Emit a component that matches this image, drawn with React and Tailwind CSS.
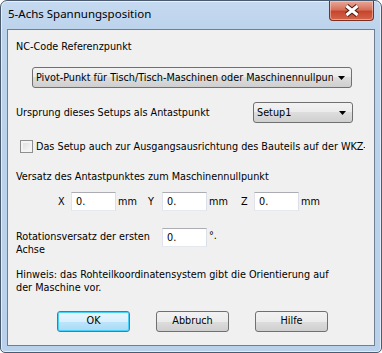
import React from "react";

const font = "font-['DejaVu_Sans_Condensed','Liberation_Sans',Arial,sans-serif]";

function Combo({ children, className = "" }) {
  return (
    <div
      className={`relative flex h-[21px] items-center rounded-[3px] border border-[#707070] bg-[linear-gradient(#f2f2f2,#ebebeb_50%,#dddddd_50%,#cfcfcf)] ${className}`}
    >
      <div className="ml-[3px] mr-[18px] overflow-hidden whitespace-nowrap leading-[13px]">{children}</div>
      <svg className="absolute right-[6px] top-[8px]" width="7" height="4" viewBox="0 0 7 4">
        <path d="M0 0H7L3.5 4Z" fill="#000" />
      </svg>
    </div>
  );
}

function Field({ className = "" }) {
  return (
    <div
      className={`h-[19px] w-[45px] border border-[#abadb3] border-t-[#abadb3] border-l-[#e2e3ea] border-r-[#dbdfe6] border-b-[#e3e9ef] bg-white pl-[4px] pt-[2px] leading-[13px] ${className}`}
    >
      0.
    </div>
  );
}

function Btn({ children, def }) {
  return (
    <div
      className={`flex h-[21px] w-[73px] items-center justify-center rounded-[3px] border ${
        def
          ? "border-[#3c7fb1] shadow-[inset_0_0_0_1px_#48d0f8] bg-[linear-gradient(#eaf6fd,#d9f0fc_50%,#bee6fd_50%,#a7d9f5)]"
          : "border-[#707070] bg-[linear-gradient(#f2f2f2,#ebebeb_50%,#dddddd_50%,#cfcfcf)]"
      }`}
    >
      {children}
    </div>
  );
}

export default function App() {
  return (
    <div className={`h-[353px] w-[382px] ${font} text-[10.75px] text-black`}>
      <div className="flex h-[353px] w-[382px] flex-col rounded-t-[7px] rounded-b-[5px] border border-[#4a5b70] bg-[linear-gradient(#c5daf0,#bcd3ec_30px,#b9d1ea)] shadow-[inset_0_0_0_1px_rgba(255,255,255,0.6)]">
        <div className="flex h-[28px] items-start">
          <div className="ml-[7px] mt-[5px] font-['Noto_Sans',sans-serif] text-[11.5px] leading-[16px] text-black">
            5-Achs Spannungsposition
          </div>
          <div className="ml-auto mr-[7px] flex h-[20px] w-[45px] items-center justify-center rounded-b-[4px] border border-t-0 border-[#7d2f20] bg-[linear-gradient(#e9a898,#d6725c_45%,#c7452c_55%,#d2664c)] shadow-[inset_0_0_0_1px_rgba(255,220,210,0.5)]">
            <svg width="16" height="13" viewBox="0 0 16 13">
              <path
                d="M2.5 2L8 6.5L13.5 2M2.5 11L8 6.5L13.5 11"
                stroke="#4a1a12"
                strokeWidth="5"
                fill="none"
              />
              <path
                d="M2.5 2L8 6.5L13.5 2M2.5 11L8 6.5L13.5 11"
                stroke="#ffffff"
                strokeWidth="3"
                fill="none"
              />
            </svg>
          </div>
        </div>
        <div className="mx-[6px] h-[317px] border border-[#6e7f94] bg-[#f0f0f0]">
          <div className="flex flex-col">
            <div className="ml-[8px] mt-[10px] leading-[13px]">NC-Code Referenzpunkt</div>
            <Combo className="ml-[24px] mt-[14px] w-[320px]">
              Pivot-Punkt für Tisch/Tisch-Maschinen oder Maschinennullpunkt
            </Combo>
            <div className="mt-[14px] flex items-center">
              <div className="ml-[8px] leading-[13px]">Ursprung dieses Setups als Antastpunkt</div>
              <Combo className="ml-auto mr-[21px] w-[100px]">Setup1</Combo>
            </div>
            <div className="mt-[17px] flex items-center">
              <div className="ml-[12px] h-[13px] w-[13px] border border-[#8e8f8f] bg-[linear-gradient(135deg,#dcdcdc,#fbfbfb)] shadow-[inset_0_0_0_2px_#f4f4f4]" />
              <div className="ml-[3px] w-[329px] overflow-hidden whitespace-nowrap leading-[13px]">
                Das Setup auch zur Ausgangsausrichtung des Bauteils auf der WKZ-Maschine verwenden
              </div>
            </div>
            <div className="ml-[8px] mt-[17px] leading-[13px]">Versatz des Antastpunktes zum Maschinennullpunkt</div>
            <div className="ml-[50px] mt-[9px] flex items-center leading-[13px]">
              <div className="w-[13px]">X</div>
              <Field />
              <div className="w-[32px] pl-[2px]">mm</div>
              <div className="w-[14px]">Y</div>
              <Field />
              <div className="w-[34px] pl-[2px]">mm</div>
              <div className="w-[13px]">Z</div>
              <Field />
              <div className="pl-[2px]">mm</div>
            </div>
            <div className="mt-[17px] flex items-start leading-[13px]">
              <div className="ml-[8px] mt-[2px] w-[146px]">
                Rotationsversatz der ersten
                <br />
                Achse
              </div>
              <Field />
              <div className="pl-[2px] pt-[1px]">°.</div>
            </div>
            <div className="ml-[8px] mt-[12px] leading-[13px]">
              Hinweis: das Rohteilkoordinatensystem gibt die Orientierung auf
              <br />
              der Maschine vor.
            </div>
            <div className="ml-[49px] mt-[17px] flex gap-[26px]">
              <Btn def>OK</Btn>
              <Btn>Abbruch</Btn>
              <Btn>Hilfe</Btn>
            </div>
          </div>
        </div>
      </div>
    </div>
  );
}
